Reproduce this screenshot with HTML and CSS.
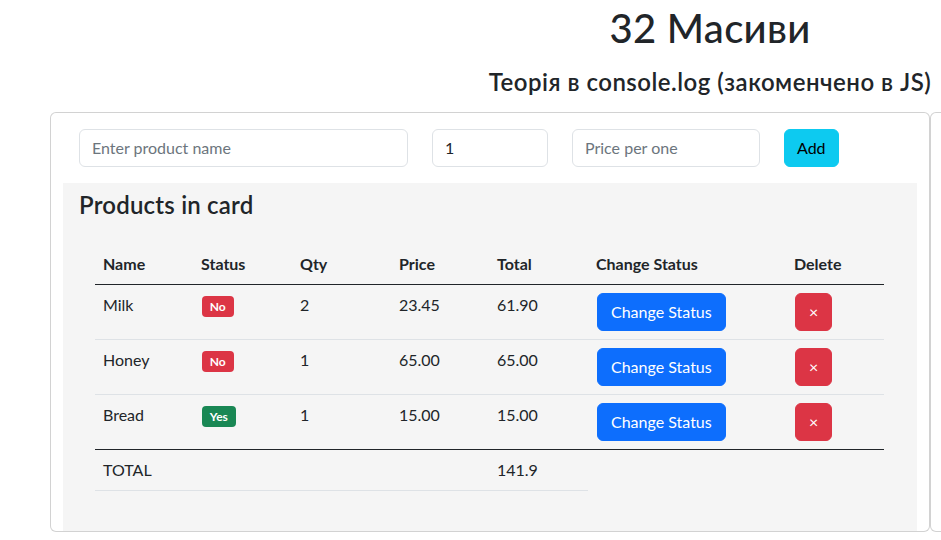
FILE: index.html
```html
<!DOCTYPE html>
<html lang="uk">
<head>
<meta charset="utf-8">
<title>32 Масиви</title>
<link rel="stylesheet" href="styles.css">
</head>
<body>
<header class="page-header">
  <h1 class="title">32 Масиви</h1>
  <h4 class="subtitle">Теорія в console.log (закоменчено в JS)</h4>
</header>
<main class="main">
  <div class="cards">
    <section class="card card-products">
      <form class="add-form">
        <input class="form-control input-name" type="text" placeholder="Enter product name">
        <input class="form-control input-qty" type="number" value="1">
        <input class="form-control input-price" type="text" placeholder="Price per one">
        <button class="btn btn-info" type="button">Add</button>
      </form>
      <div class="cart">
        <h4 class="cart-title">Products in card</h4>
        <table class="table">
          <colgroup>
            <col class="c-name"><col class="c-status"><col class="c-qty"><col class="c-price"><col class="c-total"><col class="c-change"><col class="c-delete">
          </colgroup>
          <thead>
            <tr><th>Name</th><th>Status</th><th>Qty</th><th>Price</th><th>Total</th><th>Change Status</th><th>Delete</th></tr>
          </thead>
          <tbody>
            <tr>
              <td>Milk</td><td><span class="badge badge-no">No</span></td><td>2</td><td>23.45</td><td>61.90</td>
              <td><button class="btn btn-primary" type="button">Change Status</button></td>
              <td><button class="btn btn-danger" type="button">×</button></td>
            </tr>
            <tr>
              <td>Honey</td><td><span class="badge badge-no">No</span></td><td>1</td><td>65.00</td><td>65.00</td>
              <td><button class="btn btn-primary" type="button">Change Status</button></td>
              <td><button class="btn btn-danger" type="button">×</button></td>
            </tr>
            <tr>
              <td>Bread</td><td><span class="badge badge-yes">Yes</span></td><td>1</td><td>15.00</td><td>15.00</td>
              <td><button class="btn btn-primary" type="button">Change Status</button></td>
              <td><button class="btn btn-danger" type="button">×</button></td>
            </tr>
          </tbody>
          <tfoot>
            <tr><td>TOTAL</td><td></td><td></td><td></td><td>141.9</td></tr>
          </tfoot>
        </table>
      </div>
    </section>
    <section class="card card-side"></section>
  </div>
</main>
</body>
</html>
```
FILE: styles.css
```css
* { box-sizing: border-box; }
html, body { margin: 0; }
body {
  font-family: Lato, "Noto Sans", sans-serif;
  font-size: 16px;
  line-height: 1.5;
  color: #212529;
  background: #fff;
}
.page-header {
  padding: 4px 0 0 479px;
  text-align: center;
}
.title {
  margin: 0 0 16px;
  font-size: 40px;
  font-weight: 500;
  line-height: 1.2;
  letter-spacing: 0.3px;
}
.subtitle {
  margin: 0 0 15px;
  font-size: 24px;
  font-weight: 600;
  line-height: 1.2;
  letter-spacing: 0.5px;
}
.main { overflow: hidden; }
.cards {
  display: flex;
  margin-left: 50px;
  width: 1400px;
}
.card {
  border: 1px solid rgba(0,0,0,.175);
  border-radius: 6px;
  background: #fff;
}
.card-products {
  width: 880px;
  padding: 16px 12px 0;
}
.card-side { flex: 1; }
.add-form {
  display: flex;
  gap: 24px;
  padding: 0 16px;
  margin-bottom: 16px;
}
.form-control {
  display: block;
  height: 38px;
  padding: 6px 12px;
  font: inherit;
  color: #212529;
  border: 1px solid #dee2e6;
  border-radius: 6px;
  background: #fff;
  -moz-appearance: textfield;
}
.form-control::placeholder { color: #6c757d; }
.form-control::-webkit-outer-spin-button,
.form-control::-webkit-inner-spin-button { -webkit-appearance: none; margin: 0; }
.input-name { width: 329px; }
.input-qty { width: 116px; }
.input-price { width: 188px; }
.btn {
  display: inline-block;
  padding: 6px 12px;
  font: inherit;
  line-height: 24px;
  border: 1px solid transparent;
  border-radius: 6px;
  cursor: pointer;
}
.btn-info { background: #0dcaf0; border-color: #0dcaf0; color: #000; }
.btn-primary { background: #0d6efd; border-color: #0d6efd; color: #fff; padding: 6px 13px; }
.btn-danger { background: #dc3545; border-color: #dc3545; color: #fff; padding: 6px 13px; }
.cart {
  background: #f5f5f5;
  padding: 8px 16px 24px;
}
.cart-title {
  margin: 0 0 24px;
  font-size: 24px;
  font-weight: 600;
  line-height: 1.2;
  letter-spacing: 0.2px;
}
.table {
  width: 789px;
  margin: 0 16px 16px;
  border-collapse: collapse;
  table-layout: fixed;
  vertical-align: top;
}
.c-name { width: 98px; }
.c-status, .c-qty, .c-total { width: 99px; }
.c-price { width: 98px; }
.c-change { width: 198px; }
.c-delete { width: 98px; }
.table th, .table td {
  padding: 8px;
  text-align: left;
  vertical-align: top;
  border-bottom: 1px solid #dee2e6;
}
.table th { font-weight: 700; border-bottom-color: #212529; }
.table tbody tr:last-child td { border-bottom-color: #212529; }
.badge {
  display: inline-block;
  margin-left: 1px;
  padding: .35em .65em;
  font-size: 12px;
  font-weight: 700;
  line-height: 1;
  color: #fff;
  border-radius: 4px;
}
.badge-no { background: #dc3545; }
.badge-yes { background: #198754; }
.table td .btn { margin-left: 1px; }
```
